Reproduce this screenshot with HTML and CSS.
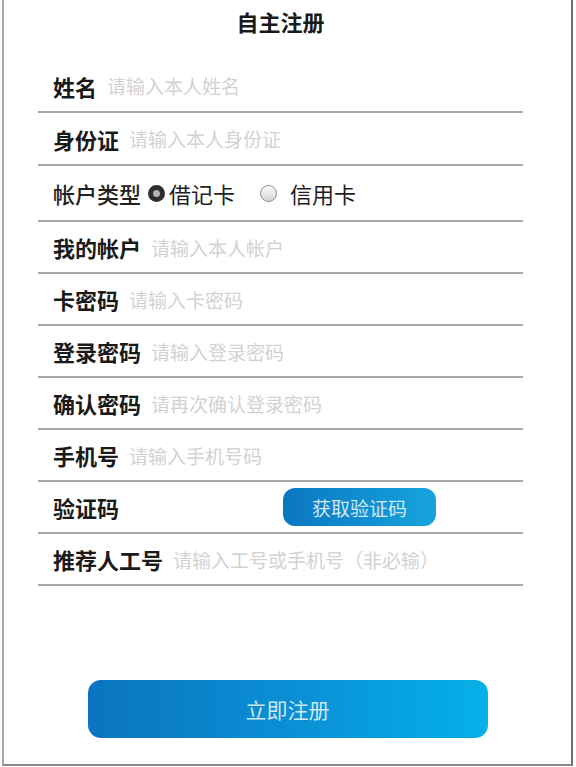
FILE: index.html
```html
<!DOCTYPE html>
<html lang="zh-CN">
<head>
<meta charset="utf-8">
<title>自主注册</title>
<link rel="stylesheet" href="styles.css">
</head>
<body>
<div class="frame">
  <div class="form">
    <h1 class="title">自主注册</h1>
    <div class="row r1"><span class="label">姓名</span><span class="ph">请输入本人姓名</span></div>
    <div class="row r2"><span class="label">身份证</span><span class="ph">请输入本人身份证</span></div>
    <div class="row r3">
      <span class="label light">帐户类型</span>
      <span class="radio checked"></span><span class="opt opt1">借记卡</span>
      <span class="radio off"></span><span class="opt opt2">信用卡</span>
    </div>
    <div class="row"><span class="label">我的帐户</span><span class="ph">请输入本人帐户</span></div>
    <div class="row"><span class="label">卡密码</span><span class="ph">请输入卡密码</span></div>
    <div class="row"><span class="label">登录密码</span><span class="ph">请输入登录密码</span></div>
    <div class="row"><span class="label">确认密码</span><span class="ph">请再次确认登录密码</span></div>
    <div class="row"><span class="label">手机号</span><span class="ph">请输入手机号码</span></div>
    <div class="row"><span class="label">验证码</span><button class="code-btn">获取验证码</button></div>
    <div class="row"><span class="label">推荐人工号</span><span class="ph">请输入工号或手机号（非必输）</span></div>
  </div>
  <button class="submit">立即注册</button>
</div>
</body>
</html>
```
FILE: styles.css
```css
* { box-sizing: border-box; }
html, body { margin: 0; padding: 0; background: #fff; }
body {
  font-family: "Noto Sans CJK SC", "Noto Sans", sans-serif;
  color: #1b1b1b;
}
.frame {
  margin: 0 3px 0 2px;
  height: 766px;
  border-left: 2px solid #a8a8a8;
  border-right: 2px solid #6e6e6e;
  border-bottom: 2px solid #8a8a8a;
  display: flex;
  flex-direction: column;
}
.form {
  margin-left: 34px;
  width: 485px;
}
.title {
  margin: 0 0 18px;
  height: 42px;
  line-height: 42px;
  text-align: center;
  font-size: 22px;
  font-weight: 700;
  color: #1a1a1a;
}
.row {
  height: 52px;
  display: flex;
  align-items: center;
  padding-left: 15px;
  border-bottom: 2px solid #a6a6a6;
}
.r1 { height: 53px; }
.r2 { height: 53px; }
.r3 { height: 56px; }
.label {
  font-size: 22px;
  font-weight: 700;
  line-height: 1;
  color: #1a1a1a;
}
.label.light { font-weight: 500; color: #222; }
.ph {
  margin-left: 10px;
  font-size: 19px;
  line-height: 1;
  color: #d2d2d2;
}
.radio {
  display: block;
  width: 17px;
  height: 17px;
  min-width: 17px;
  border-radius: 50%;
  flex: 0 0 17px;
}
.radio.checked {
  margin-left: 7px;
  border: 5px solid #2e2e2e;
  background: #b4b4b4;
}
.radio.off {
  margin-left: 25px;
  border: 1.5px solid #8c8c8c;
  background: linear-gradient(#fdfdfd, #d4d4d4);
}
.opt {
  font-size: 22px;
  line-height: 1;
  color: #1e1e1e;
}
.opt1 { margin-left: 4px; }
.opt2 { margin-left: 13px; }
.code-btn {
  margin-left: 164px;
  width: 153px;
  height: 38px;
  border: none;
  border-radius: 12px;
  background: linear-gradient(90deg, #0a76c2, #15a4de);
  color: #d3e9f6;
  font-family: inherit;
  font-size: 19px;
  padding: 0;
}
.submit {
  margin: 94px auto 0;
  width: 400px;
  height: 58px;
  border: none;
  border-radius: 13px;
  background: linear-gradient(90deg, #0a74c0 0%, #0a8fd4 50%, #05b0e8 100%);
  color: #cfe8f6;
  font-family: inherit;
  font-size: 21px;
  padding: 0;
  flex: none;
}
```
